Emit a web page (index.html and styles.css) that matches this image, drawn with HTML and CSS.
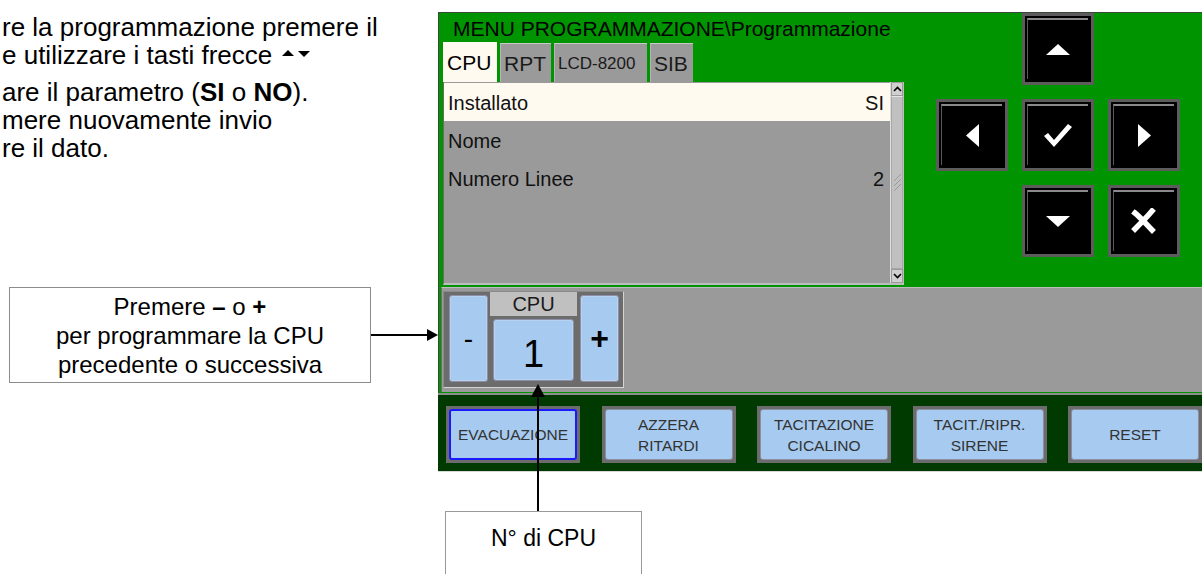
FILE: index.html
```html
<!DOCTYPE html>
<html lang="it">
<head>
<meta charset="utf-8">
<title>Menu Programmazione</title>
<link rel="stylesheet" href="styles.css">
</head>
<body>
<div class="page">
  <div class="left">
    <div class="instr">
      <p class="ln">re la programmazione premere il</p>
      <p class="ln ln-gap">e utilizzare i tasti frecce <svg class="tri" width="30" height="12" viewBox="0 0 30 12"><polygon points="1,8 7,2 13,8" fill="#000"/><polygon points="17,3 29,3 23,9" fill="#000"/></svg></p>
      <p class="ln">are il parametro (<b>SI</b> o <b>NO</b>).</p>
      <p class="ln">mere nuovamente invio</p>
      <p class="ln">re il dato.</p>
    </div>
    <div class="callout-row">
      <div class="callout">
        <span>Premere <b>–</b> o <b>+</b></span>
        <span>per programmare la CPU</span>
        <span>precedente o successiva</span>
      </div>
      <svg class="harrow" width="67" height="14" viewBox="0 0 67 14"><line x1="0" y1="7" x2="58" y2="7" stroke="#000" stroke-width="2"/><polygon points="56,1 67,7 56,13" fill="#000"/></svg>
    </div>
  </div>

  <div class="screen">
    <div class="main">
      <div class="upper">
        <div class="content">
          <div class="title">MENU PROGRAMMAZIONE\Programmazione</div>
          <div class="tabs">
            <div class="tab active">CPU</div>
            <div class="tab">RPT</div>
            <div class="tab small">LCD-8200</div>
            <div class="tab">SIB</div>
          </div>
          <div class="list">
            <div class="rows">
              <div class="row sel"><span>Installato</span><span>SI</span></div>
              <div class="row"><span>Nome</span><span></span></div>
              <div class="row"><span>Numero Linee</span><span>2</span></div>
            </div>
            <div class="scroll">
              <div class="sbtn"><svg width="9" height="6" viewBox="0 0 9 6"><polyline points="1,5 4.5,1.5 8,5" fill="none" stroke="#000" stroke-width="1.6"/></svg></div>
              <div class="thumb"><svg width="9" height="20" viewBox="0 0 9 20"><path d="M1 8 L8 1 M1 13 L8 6 M1 18 L8 11" stroke="#9a9a9a" stroke-width="1"/></svg></div>
              <div class="sbtn"><svg width="9" height="6" viewBox="0 0 9 6"><polyline points="1,1 4.5,4.5 8,1" fill="none" stroke="#000" stroke-width="1.6"/></svg></div>
            </div>
          </div>
        </div>
        <div class="keypad">
          <div class="key k-up"><svg width="24" height="11" viewBox="0 0 24 11"><polygon points="0,11 12,0 24,11" fill="#fff"/></svg></div>
          <div class="key k-left"><svg width="13" height="23" viewBox="0 0 13 23"><polygon points="13,0 0,11.5 13,23" fill="#fff"/></svg></div>
          <div class="key k-ok"><svg width="28" height="23" viewBox="0 0 28 23"><polygon points="0,12 4,9 10,16 24,0 28,3 10,23" fill="#fff"/></svg></div>
          <div class="key k-right"><svg width="13" height="23" viewBox="0 0 13 23"><polygon points="0,0 13,11.5 0,23" fill="#fff"/></svg></div>
          <div class="key k-down"><svg width="24" height="11" viewBox="0 0 24 11"><polygon points="0,0 24,0 12,11" fill="#fff"/></svg></div>
          <div class="key k-x"><svg width="26" height="26" viewBox="0 0 26 26"><path d="M4 5 C9 9 15 16 21 22 M21 3 C16 9 10 15 4 21" stroke="#fff" stroke-width="5.5" stroke-linecap="square" fill="none"/></svg></div>
        </div>
      </div>
      <div class="cpu-panel">
        <div class="cpu-widget">
          <div class="bbtn pm">-</div>
          <div class="mid">
            <div class="cpu-label">CPU</div>
            <div class="bbtn cpu-val">1</div>
          </div>
          <div class="bbtn pm plus">+</div>
        </div>
      </div>
    </div>
    <div class="bar">
      <div class="fbtn"><div class="fin sel">EVACUAZIONE</div></div>
      <div class="fbtn"><div class="fin">AZZERA<br>RITARDI</div></div>
      <div class="fbtn"><div class="fin">TACITAZIONE<br>CICALINO</div></div>
      <div class="fbtn"><div class="fin">TACIT./RIPR.<br>SIRENE</div></div>
      <div class="fbtn"><div class="fin">RESET</div></div>
    </div>
  </div>
</div>

<svg class="varrow" width="16" height="128" viewBox="0 0 16 128"><polygon points="8,0 1,13 15,13" fill="#000"/><line x1="8" y1="10" x2="8" y2="128" stroke="#000" stroke-width="2"/></svg>
<div class="note-cpu">N° di CPU</div>
</body>
</html>
```
FILE: styles.css
```css
* { box-sizing: border-box; }
html, body { margin: 0; padding: 0; }
body {
  width: 1202px;
  height: 574px;
  overflow: hidden;
  background: #fff;
  font-family: "Liberation Sans", Arial, sans-serif;
  color: #000;
  position: relative;
}
.page { display: flex; }

/* left annotations */
.left { width: 438px; flex: none; }
.instr { height: 287px; padding-top: 13px; padding-left: 2px; font-size: 26px; }
.ln { margin: 0; line-height: 28px; white-space: nowrap; }
.ln-gap { margin-bottom: 9px; }
.tri { vertical-align: 4px; margin-left: 2px; }
.callout-row { display: flex; align-items: center; padding-left: 9px; }
.callout {
  width: 362px; height: 96px;
  border: 1px solid #8c8c8c;
  display: flex; flex-direction: column; align-items: center; justify-content: center;
  font-size: 24px; line-height: 29px;
}
.harrow { display: block; flex: none; }

/* screen */
.screen { width: 764px; flex: none; margin-top: 12px; }
.main {
  background: #009400;
  border-top: 1px solid #3a4a3a;
  border-left: 1px solid #3a4a3a;
  height: 381px;
  display: flex; flex-direction: column;
}
.upper { display: flex; height: 273px; }
.content { margin-left: 4px; width: 461px; flex: none; }
.title { height: 29px; line-height: 31px; font-size: 21px; padding-left: 10px; white-space: nowrap; }
.tabs { display: flex; gap: 3px; height: 40px; align-items: flex-end; }
.tab {
  height: 39px; line-height: 40px;
  background: #9a9a9a;
  border-top: 1px solid #c9c9c9;
  border-left: 1px solid #b5b5b5;
  font-size: 21px; color: #1a1a1a;
  padding: 0 3px;
}
.tab:nth-child(1) { width: 54px; }
.tab:nth-child(2) { width: 51px; }
.tab:nth-child(3) { width: 93px; }
.tab:nth-child(4) { width: 43px; }
.tab.active { background: #fffaf0; height: 40px; border-color: #fffaf0; color: #000; }
.tab.small { font-size: 17px; }

.list {
  height: 203px;
  background: #9a9a9a;
  display: flex;
  border-left: 1px solid #6a6a6a;
  border-bottom: 2px solid #bdbdbd;
  border-right: 1px solid #bdbdbd;
}
.rows { flex: 1; padding-top: 1px; }
.row {
  height: 38px; line-height: 40px;
  display: flex; justify-content: space-between;
  font-size: 20px; color: #111;
  padding: 0 6px 0 4px;
}
.row.sel { background: #fffaf0; }
.scroll {
  width: 13px; flex: none;
  display: flex; flex-direction: column;
  background: #c4c4c4;
  border-left: 1px solid #dedede;
}
.sbtn {
  height: 14px; flex: none;
  display: flex; align-items: center; justify-content: center;
  background: #d0d0d0;
  border: 1px solid #9a9a9a;
}
.thumb {
  flex: 1;
  display: flex; align-items: center; justify-content: center;
  background: #c0c0c0;
  border: 1px solid #a8a8a8;
  border-top-color: #e6e6e6;
}

.keypad {
  margin-left: 32px;
  display: grid;
  grid-template-columns: repeat(3, 72px);
  grid-template-rows: repeat(3, 72px);
  gap: 14px;
}
.key {
  position: relative;
  background: #000;
  border: 3px solid #5c5c5c;
  display: flex; align-items: center; justify-content: center;
}
.key::before {
  content: "";
  position: absolute;
  left: 2px; top: 2px; right: 3px; bottom: 3px;
  border-top: 2px solid #8a8a8a;
  border-left: 1px solid #5a5a5a;
}
.k-up { grid-column: 2; grid-row: 1; }
.k-left { grid-column: 1; grid-row: 2; }
.k-ok { grid-column: 2; grid-row: 2; }
.k-right { grid-column: 3; grid-row: 2; }
.k-down { grid-column: 2; grid-row: 3; }
.k-x { grid-column: 3; grid-row: 3; }

.cpu-panel {
  margin-top: 1px; margin-left: 2px;
  height: 105px;
  background: #9a9a9a;
  border-top: 1px solid #bdbdbd;
  border-left: 1px solid #6e6e6e;
  padding: 3px 0 0 1px;
}
.cpu-widget {
  width: 181px; height: 97px;
  background: #6c6c6c;
  border: 1px solid #d4d4d4;
  border-top-color: #8a8a8a;
  border-left-color: #8a8a8a;
  display: flex;
  padding: 0 4px 0 5px;
}
.bbtn {
  background: #a6caf0;
  border: 1px solid #8d8fa6;
  border-radius: 3px;
  box-shadow: inset 0 0 0 1px #b9d2f0;
  display: flex; align-items: center; justify-content: center;
}
.pm { width: 39px; height: 87px; margin-top: 3px; font-size: 28px; }
.plus { font-size: 32px; font-weight: bold; margin-left: 3px; }
.mid { width: 87px; margin-left: 2px; display: flex; flex-direction: column; }
.cpu-label { height: 24px; background: #c0c0c0; text-align: center; font-size: 20px; line-height: 25px; color: #1a1a1a; }
.cpu-val { height: 62px; margin: 3px 3px 0 3px; font-size: 38px; padding-top: 8px; }

.bar {
  height: 79px;
  background: #003a00;
  border-top: 2px solid #8e8e8e;
  border-bottom: 1px solid #d8d8d8;
  display: flex;
  gap: 21.5px;
  padding: 11px 0 0 8px;
}
.fbtn {
  width: 134px; height: 57px; flex: none;
  background: #6c6c6c;
  padding: 3px;
}
.fin {
  height: 100%;
  background: #a6caf0;
  border: 1px solid #8b8e9e;
  border-radius: 3px;
  display: flex; align-items: center; justify-content: center;
  text-align: center;
  font-size: 15.5px; line-height: 21px; color: #333;
}
.fin.sel { border: 2px solid #1a1aff; }

/* overlays */
.varrow { position: absolute; left: 530px; top: 384px; }
.note-cpu {
  position: absolute;
  left: 445px; top: 511px;
  width: 197px; height: 80px;
  border: 1px solid #999;
  text-align: center;
  font-size: 23px; line-height: 28px;
  padding-top: 12px;
}
```
